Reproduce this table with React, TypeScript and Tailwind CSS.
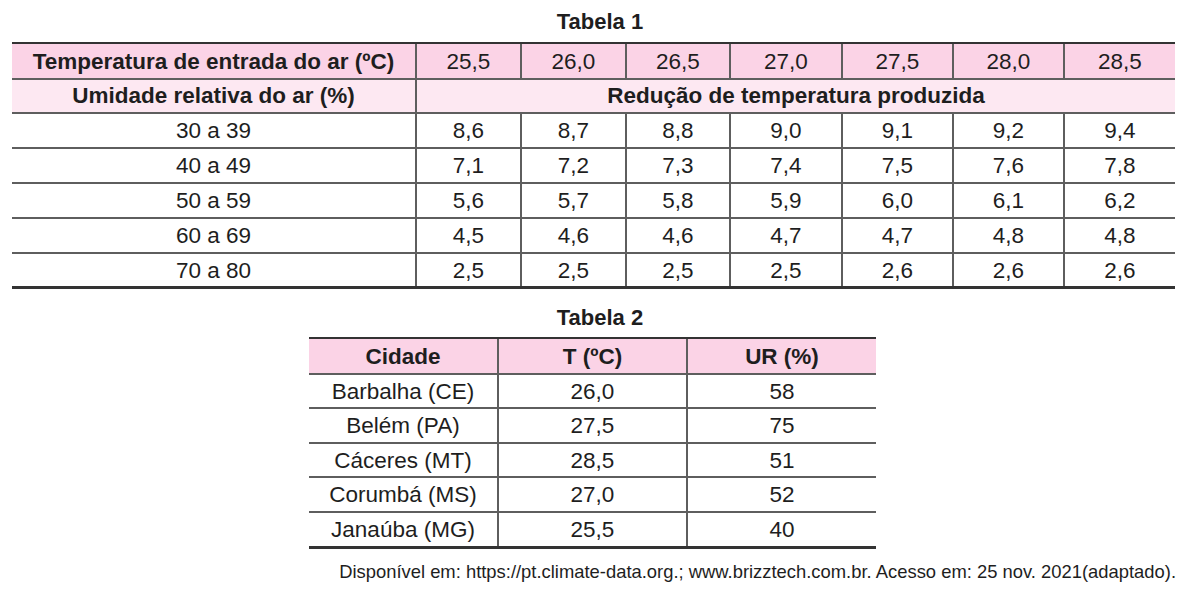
import React from "react";

const cols = ["w-[105px]", "w-[105px]", "w-[104px]", "w-[112px]", "w-[111px]", "w-[111px]", "w-[110px]"];
const temps = ["25,5", "26,0", "26,5", "27,0", "27,5", "28,0", "28,5"];
const body: [string, string[], string][] = [
  ["30 a 39", ["8,6", "8,7", "8,8", "9,0", "9,1", "9,2", "9,4"], "h-[35px] border-b-2"],
  ["40 a 49", ["7,1", "7,2", "7,3", "7,4", "7,5", "7,6", "7,8"], "h-[35px] border-b-2"],
  ["50 a 59", ["5,6", "5,7", "5,8", "5,9", "6,0", "6,1", "6,2"], "h-[35px] border-b-2"],
  ["60 a 69", ["4,5", "4,6", "4,6", "4,7", "4,7", "4,8", "4,8"], "h-[35px] border-b-2"],
  ["70 a 80", ["2,5", "2,5", "2,5", "2,5", "2,6", "2,6", "2,6"], "h-[32px]"],
];

const cities: [string, string, string, string][] = [
  ["Barbalha (CE)", "26,0", "58", "h-[34px] border-b-2"],
  ["Belém (PA)", "27,5", "75", "h-[35px] border-b-2"],
  ["Cáceres (MT)", "28,5", "51", "h-[34px] border-b-2"],
  ["Corumbá (MS)", "27,0", "52", "h-[35px] border-b-2"],
  ["Janaúba (MG)", "25,5", "40", "h-[33px]"],
];

export default function App() {
  return (
    <div
      className="w-[1200px] h-[599px] bg-white text-[#1e1e1e] overflow-hidden"
      style={{ fontFamily: '"Liberation Sans", Arial, sans-serif' }}
    >
      <div className="h-[42px] flex items-center justify-center pt-[1px] text-[22px] font-bold leading-none">
        Tabela 1
      </div>
      <div className="ml-[12px] w-[1163px] border-t-2 border-b-[3px] border-[#333] text-[22.5px] leading-none">
        <div className="flex h-[36px] bg-[#fbd3e6] border-b-2 border-[#5e5e5e]">
          <div className="w-[405px] border-r-2 border-[#5e5e5e] flex items-center justify-center pt-[2px] font-bold">
            Temperatura de entrada do ar (ºC)
          </div>
          {temps.map((t, i) => (
            <div
              key={t}
              className={`${cols[i]} ${i < 6 ? "border-r-2" : ""} border-[#5e5e5e] flex items-center justify-center pt-[2px]`}
            >
              {t}
            </div>
          ))}
        </div>
        <div className="flex h-[34px] bg-[#fde8f2] border-b-2 border-[#5e5e5e]">
          <div className="w-[405px] border-r-2 border-[#5e5e5e] flex items-center justify-center pt-[1px] font-bold">
            Umidade relativa do ar (%)
          </div>
          <div className="flex-1 flex items-center justify-center pt-[1px] font-bold">
            Redução de temperatura produzida
          </div>
        </div>
        {body.map(([label, vals, rowCls]) => (
          <div key={label} className={`flex ${rowCls} border-[#5e5e5e]`}>
            <div className="w-[405px] border-r-2 border-[#5e5e5e] flex items-center justify-center pt-[2px]">
              {label}
            </div>
            {vals.map((v, i) => (
              <div
                key={i}
                className={`${cols[i]} ${i < 6 ? "border-r-2" : ""} border-[#5e5e5e] flex items-center justify-center pt-[2px]`}
              >
                {v}
              </div>
            ))}
          </div>
        ))}
      </div>

      <div className="h-[48px] flex items-center justify-center pt-[10px] text-[22px] font-bold leading-none">
        Tabela 2
      </div>
      <div className="ml-[309px] w-[567px] border-t-2 border-b-[3px] border-[#333] text-[22.5px] leading-none">
        <div className="flex h-[36px] bg-[#fbd3e6] border-b-2 border-[#5e5e5e] font-bold">
          <div className="w-[190px] border-r-2 border-[#5e5e5e] flex items-center justify-center pt-[2px]">Cidade</div>
          <div className="w-[189px] border-r-2 border-[#5e5e5e] flex items-center justify-center pt-[2px]">T (ºC)</div>
          <div className="w-[188px] flex items-center justify-center pt-[2px]">UR (%)</div>
        </div>
        {cities.map(([c, t, u, rowCls]) => (
          <div key={c} className={`flex ${rowCls} border-[#5e5e5e]`}>
            <div className="w-[190px] border-r-2 border-[#5e5e5e] flex items-center justify-center pt-[2px]">{c}</div>
            <div className="w-[189px] border-r-2 border-[#5e5e5e] flex items-center justify-center pt-[2px]">{t}</div>
            <div className="w-[188px] flex items-center justify-center pt-[2px]">{u}</div>
          </div>
        ))}
      </div>
      <div className="mt-[12px] w-[1176px] text-right text-[18.4px] leading-[22px]">
        Disponível em: https://pt.climate-data.org.; www.brizztech.com.br. Acesso em: 25 nov. 2021(adaptado).
      </div>
    </div>
  );
}
